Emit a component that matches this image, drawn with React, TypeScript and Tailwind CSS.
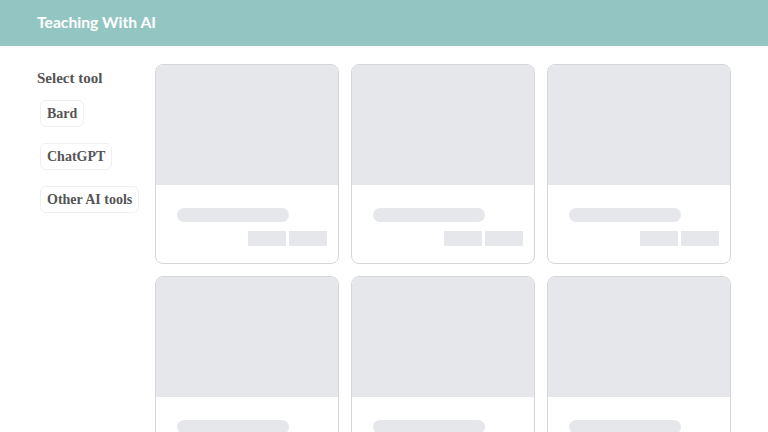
const tools = ['Bard', 'ChatGPT', 'Other AI tools'];

function SkeletonCard() {
  return (
    <div className="flex h-[200px] flex-col overflow-hidden rounded-lg border border-[#d4d6da] bg-white">
      <div className="h-[120px] bg-[#e5e7ea]" />
      <div className="flex flex-1 flex-col pl-[21px] pr-[11px] pt-[23px]">
        <div className="h-[14px] w-[112px] rounded-full bg-[#e5e7ea]" />
        <div className="mt-[9px] flex justify-end gap-[3px]">
          <div className="h-[15px] w-[38px] bg-[#e5e7ea]" />
          <div className="h-[15px] w-[38px] bg-[#e5e7ea]" />
        </div>
      </div>
    </div>
  );
}

export default function App() {
  return (
    <div className="min-h-screen bg-white">
      <header className="flex h-[46px] items-center bg-[#93c6c3] px-[37px]">
        <h1 className="font-['Lato',sans-serif] text-[15.7px] font-bold text-white">Teaching With AI</h1>
      </header>

      <main className="flex gap-[19px] pl-[37px] pt-[18px]">
        <aside className="w-[99px] shrink-0 font-['Liberation_Serif',serif] text-[#555]">
          <h2 className="mt-[3px] text-[15px] font-bold">Select tool</h2>
          <div className="mt-[10px] flex flex-col items-start gap-[16px] pl-[3px]">
            {tools.map((tool) => (
              <button
                key={tool}
                className="whitespace-nowrap rounded-md border border-[#f0f0f0] bg-white px-[6px] py-[4px] text-[14px] font-bold leading-[17px] text-[#555]"
              >
                {tool}
              </button>
            ))}
          </div>
        </aside>

        <section className="grid w-[576px] grid-cols-3 gap-[12px]">
          {Array.from({ length: 6 }).map((_, i) => (
            <SkeletonCard key={i} />
          ))}
        </section>
      </main>
    </div>
  );
}
